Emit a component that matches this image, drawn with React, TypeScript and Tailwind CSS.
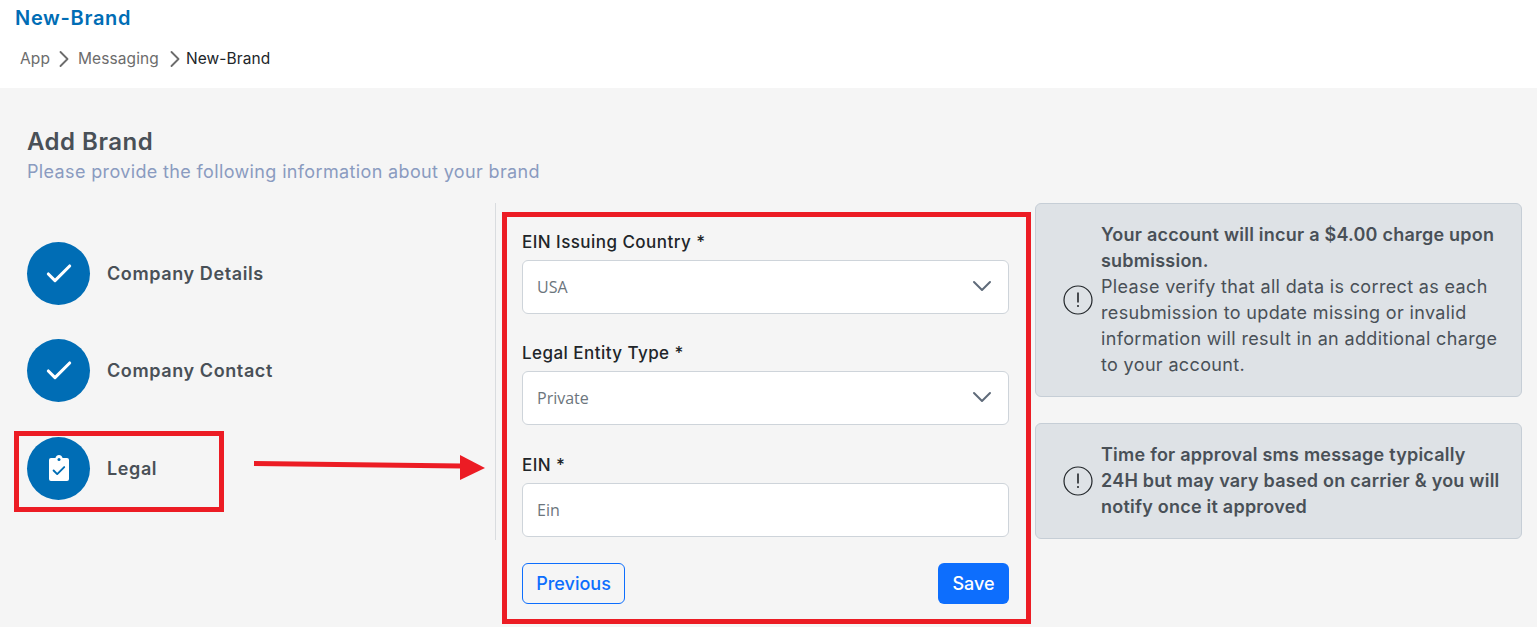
import React from 'react';
import { Check, ChevronRight, ChevronDown } from 'lucide-react';

const CircleAlert: React.FC = () => (
  <svg width="30" height="30" viewBox="0 0 30 30" fill="none" className="shrink-0 text-[#212529]">
    <circle cx="15" cy="15" r="14" stroke="currentColor" strokeWidth="1.2" />
    <path d="M15 7.5v10" stroke="currentColor" strokeWidth="1.6" />
    <circle cx="15" cy="21" r="1" fill="currentColor" />
  </svg>
);

const ClipboardFilled: React.FC = () => (
  <svg width="20" height="26" viewBox="0 0 20 26" fill="none">
    <path
      d="M2 3h4.4C7 1.2 8.3 0 10 0s3 1.2 3.6 3H18a2 2 0 0 1 2 2v19a2 2 0 0 1-2 2H2a2 2 0 0 1-2-2V5a2 2 0 0 1 2-2z"
      fill="#fff"
    />
    <circle cx="10" cy="4.6" r="1.5" fill="#006db5" />
    <path d="M4.6 15.5l3.6 3.6 7-7" stroke="#006db5" strokeWidth="1.9" strokeLinecap="round" strokeLinejoin="round" />
  </svg>
);

const Step: React.FC<{ label: string; children: React.ReactNode }> = ({ label, children }) => (
  <div className="flex items-center gap-[17px]">
    <div className="flex h-[63px] w-[63px] items-center justify-center rounded-full bg-[#006db5] text-white">{children}</div>
    <span className="text-[18px] font-semibold tracking-[0.6px] text-[#495057]">{label}</span>
  </div>
);

const SelectField: React.FC<{ label: string; value: string; className?: string }> = ({ label, value, className }) => (
  <div className={className}>
    <label className="block h-[29px] text-[17px] font-medium leading-[23px] tracking-[0.45px] text-[#212529]">{label}</label>
    <div className="relative">
      <select
        defaultValue={value}
        className="h-[54px] w-full appearance-none rounded-md border border-[#ced4da] bg-white px-[14px] font-['Open_Sans',sans-serif] text-[16px] text-[#6c757d]"
      >
        <option>{value}</option>
      </select>
      <ChevronDown size={32} strokeWidth={1.5} className="absolute right-[11px] top-[10px] text-[#5f6b7a]" />
    </div>
  </div>
);

const App: React.FC = () => {
  return (
    <div className="relative h-[627px] overflow-hidden bg-[#f5f5f5] font-['Inter',sans-serif]">
      <header className="h-[88px] bg-white pl-[15px] pt-[5px]">
        <h1 className="text-[20px] font-semibold leading-[27px] tracking-[0.7px] text-[#006db5]">New-Brand</h1>
        <nav className="ml-[5px] mt-[13px] flex items-center text-[15.5px] leading-[24px] tracking-[0.1px] text-[#6c6c6c]">
          <span>App</span>
          <ChevronRight size={28} strokeWidth={1.6} />
          <span>Messaging</span>
          <ChevronRight size={28} strokeWidth={1.6} className="ml-[2px] -mr-[3px]" />
          <span className="text-[#212529]">New-Brand</span>
        </nav>
      </header>

      <main className="pl-[27px] pr-[15px] pt-[39px]">
        <h2 className="text-[24px] font-semibold leading-[30px] tracking-[0.5px] text-[#495057]">Add Brand</h2>
        <p className="mt-[2px] text-[18px] leading-[26px] tracking-[0.36px] text-[#8a9bc0]">Please provide the following information about your brand</p>

        <div className="mt-[18px] flex items-start">
          <div className="flex h-[337px] w-[469px] flex-col gap-[34.4px] border-r border-[#d9dcdf] pt-[39px]">
            <Step label="Company Details">
              <Check size={32} strokeWidth={2.3} />
            </Step>
            <Step label="Company Contact">
              <Check size={32} strokeWidth={2.3} />
            </Step>
            <Step label="Legal">
              <ClipboardFilled />
            </Step>
          </div>

          <form className="ml-[26px] w-[487px] pt-[28px]">
            <SelectField label="EIN Issuing Country *" value="USA" />
            <SelectField label="Legal Entity Type *" value="Private" className="mt-[28px]" />
            <div className="mt-[29px]">
              <label className="block h-[29px] text-[17px] font-medium leading-[23px] tracking-[0.45px] text-[#212529]">EIN *</label>
              <input
                placeholder="Ein"
                className="h-[54px] w-full rounded-md border border-[#ced4da] bg-white px-[14px] font-['Open_Sans',sans-serif] text-[16px] text-[#6c757d] placeholder:text-[#6c757d]"
              />
            </div>
            <div className="mt-[26px] flex justify-between">
              <button type="button" className="h-[41px] w-[103px] rounded-md border border-[#0d6efd] text-[18px] font-medium text-[#0d6efd]">Previous</button>
              <button type="button" className="h-[41px] w-[71px] rounded-md bg-[#0d6efd] text-[18px] font-medium text-white">Save</button>
            </div>
          </form>

          <aside className="ml-[26px] flex w-[487px] flex-col gap-[26px]">
            <div className="flex h-[194px] items-center gap-[8px] rounded-md border border-[#c6ced6] bg-[#dee2e6] pl-[27px] pr-[16px] text-[18px] leading-[26px] tracking-[0.35px] text-[#495057]">
              <CircleAlert />
              <p>
                <b className="font-semibold tracking-[0.23px]">Your account will incur a $4.00 charge upon submission.</b>
                <br />
                Please verify that all data is correct as each resubmission to update missing or invalid information will result in an additional charge to your account.
              </p>
            </div>
            <div className="flex h-[116px] items-center gap-[8px] rounded-md border border-[#c6ced6] bg-[#dee2e6] pl-[27px] pr-[16px] text-[18px] leading-[26px] tracking-[0.23px] text-[#495057]">
              <CircleAlert />
              <p className="font-semibold">Time for approval sms message typically 24H but may vary based on carrier &amp; you will notify once it approved</p>
            </div>
          </aside>
        </div>
      </main>

      {/* red annotations drawn over the page */}
      <div className="absolute left-[14px] top-[431px] h-[81px] w-[210px] border-[5px] border-[#ec1c24]" />
      <div className="absolute left-[502px] top-[212px] h-[412px] w-[529px] border-[5px] border-[#ec1c24]" />
      <svg width="235" height="30" viewBox="0 0 235 30" className="absolute left-[252px] top-[453px]">
        <path d="M2 10.5l207 2.5" stroke="#ec1c24" strokeWidth="5" />
        <path d="M208 2l25 13-25 12z" fill="#ec1c24" />
      </svg>
    </div>
  );
};

export default App;
